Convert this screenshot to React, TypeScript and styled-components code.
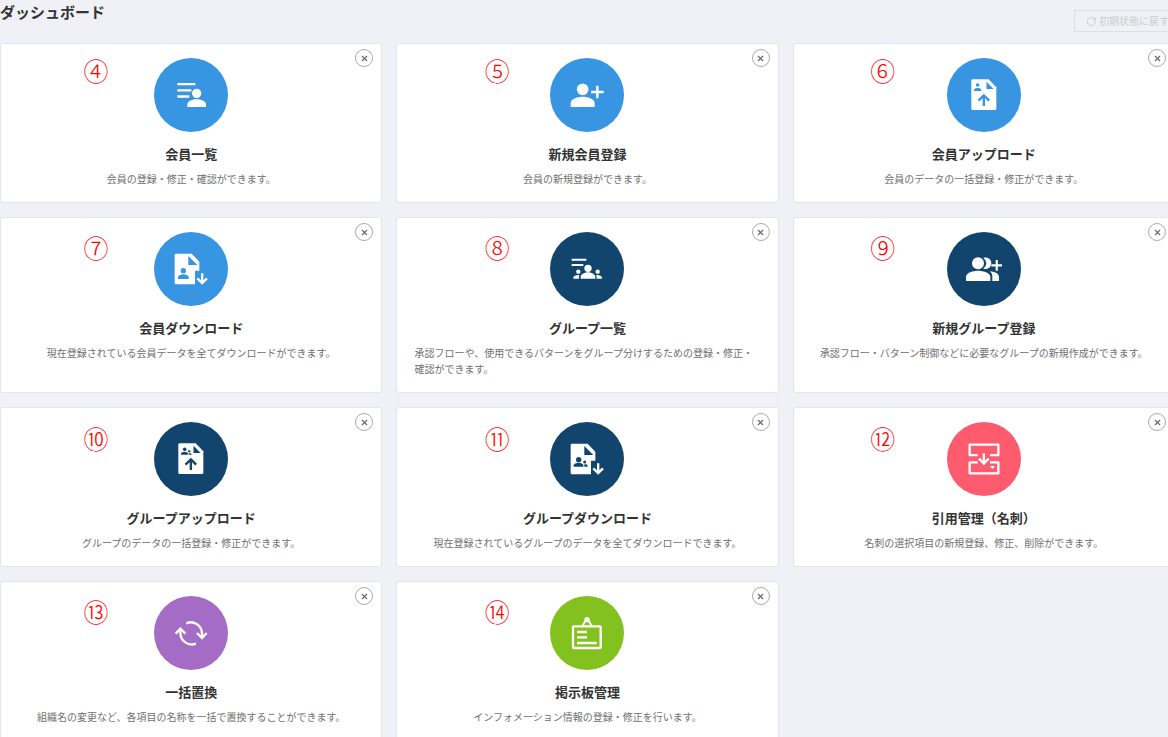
import React from "react";
import styled, { createGlobalStyle } from "styled-components";
import { RotateCw, X } from "lucide-react";

const GlobalStyle = createGlobalStyle`
  *, *::before, *::after { box-sizing: border-box; }
  html { background: #f0f1f6; }
  body {
    margin: 0;
    overflow-x: hidden;
    color: #333;
    font-family: "Noto Sans CJK JP", "Noto Sans", sans-serif;
  }
`;

const Page = styled.main`
  margin-right: -7px;
  padding-bottom: 15px;
`;

const Header = styled.header`
  display: flex;
  justify-content: space-between;
  align-items: flex-start;
  height: 43px;
`;

const PageTitle = styled.h1`
  margin: 0;
  font-size: 15px;
  line-height: 24px;
  font-weight: 700;
`;

const ResetButton = styled.button`
  display: flex;
  align-items: center;
  gap: 2px;
  height: 22px;
  margin-top: 10px;
  padding: 0 5px 0 11px;
  border: 1px solid #dedfe3;
  background: transparent;
  color: #cbccd0;
  font-family: inherit;
  font-size: 10px;
  line-height: 16px;
  white-space: nowrap;
`;

const CardGrid = styled.div`
  display: grid;
  grid-template-columns: repeat(3, minmax(0, 1fr));
  gap: 14px;
`;

const Card = styled.section`
  position: relative;
  display: flex;
  flex-direction: column;
  align-items: center;
  padding: 14px 14px 15px;
  border: 1px solid #e3e5e9;
  border-radius: 3px;
  background: #fff;
`;

const Badge = styled.div<{ $color: string }>`
  width: 74px;
  height: 74px;
  border-radius: 50%;
  background: ${(p) => p.$color};
  color: ${(p) => p.$color};

  svg {
    display: block;
    width: 100%;
    height: 100%;
  }
`;

const CardTitle = styled.h2`
  margin: 12px 0 0;
  font-size: 13px;
  line-height: 20px;
  font-weight: 700;
`;

const Description = styled.p`
  max-width: 346px;
  margin: 7px 0 0;
  color: #707070;
  font-size: 10px;
  line-height: 16px;
`;

const CloseButton = styled.button`
  position: absolute;
  top: 5px;
  right: 8px;
  display: flex;
  align-items: center;
  justify-content: center;
  width: 18px;
  height: 18px;
  padding: 0;
  border: 1px solid #aaa;
  border-radius: 50%;
  background: #fff;
  color: #666;
`;

const Marker = styled.span<{ $x: number; $y: number }>`
  position: absolute;
  left: ${(p) => p.$x}px;
  top: ${(p) => p.$y}px;
  width: 26px;
  color: #f00;
  font-size: 25px;
  line-height: 26px;
  font-weight: 300;
  text-align: center;
`;

const Icon = ({ children }: { children: React.ReactNode }) => (
  <svg viewBox="0 0 222 222" fill="#fff" aria-hidden="true">
    {children}
  </svg>
);

const stroke = (width: number, color = "#fff") => ({
  fill: "none",
  stroke: color,
  strokeWidth: width,
});

const MemberList = () => (
  <Icon>
    <path d="M70 75h54v7H70zM70 93.500h42v7H70zM70 112h36v7H70z" />
    <circle cx="128" cy="106" r="14" />
    <path d="M100 147v-8c0-10 17-15 28-15s28 5 28 15v8z" />
  </Icon>
);

const MemberAdd = () => (
  <Icon>
    <circle cx="98" cy="94" r="17.500" />
    <path d="M62 147v-12c0-13 22-19 36-19s36 6 36 19v12z" />
    <path d="M138.500 83h7v15.500H161v7h-15.500V121h-7v-15.500H123v-7h15.500z" />
  </Icon>
);

const UploadSheet = ({ children }: { children: React.ReactNode }) => (
  <Icon>
    <path d="M77 64h48l23 24v64q0 4-4 4H77q-4 0-4-4V68q0-4 4-4z" />
    <g fill="currentColor">
      <path d="M118.500 71v22H140z" />
      {children}
    </g>
    <path d="M110.500 144v-32M94.500 128l16-16 16 16" {...stroke(7, "currentColor")} />
  </Icon>
);

const MemberUpload = () => (
  <UploadSheet>
    <circle cx="92" cy="81" r="5.500" />
    <path d="M81 99v-3c0-4 7-6 11-6s11 2 11 6v3z" />
  </UploadSheet>
);

const GroupUpload = () => (
  <UploadSheet>
    <circle cx="92" cy="82" r="5.500" />
    <path d="M81 98v-3c0-4 7-5 10.500-5s10.500 1 10.500 5v3z" />
    <circle cx="105.500" cy="88" r="3.500" />
    <path d="M104 98v-4c4-1 9 0 9 4z" />
  </UploadSheet>
);

const DownloadSheet = ({ children }: { children: React.ReactNode }) => (
  <Icon>
    <path d="M66 65h47l23 24v27h-13v41H66q-4 0-4-4V69q0-4 4-4z" />
    <g fill="currentColor">
      <path d="M103 72v27h27z" />
      {children}
    </g>
    <path d="M144.500 124v29M130 139l14.500 14.500L159 139" {...stroke(7)} />
  </Icon>
);

const MemberDownload = () => (
  <DownloadSheet>
    <circle cx="88" cy="116" r="8" />
    <path d="M72 141v-5c0-6 10-9 16-9s16 3 16 9v5z" />
  </DownloadSheet>
);

const GroupDownload = () => (
  <DownloadSheet>
    <circle cx="86" cy="113" r="8" />
    <path d="M71 134v-4c0-5 9-8 15-8s14 3 14 8v4z" />
    <circle cx="104" cy="120" r="4.500" />
    <path d="M103 134v-7c5-1 10 1 10 4v3z" />
  </DownloadSheet>
);

const GroupList = () => (
  <Icon>
    <path d="M65 80h44v6H65zM65 96h35v6H65z" />
    <circle cx="114" cy="109" r="11" />
    <path d="M92 140v-5c0-9 14-14 22-14s22 5 22 14v5z" />
    <circle cx="85" cy="119" r="6.500" />
    <circle cx="143" cy="119" r="6.500" />
    <path d="M70 140v-3c0-6 10-9 18-8q-2 5-1 11zM156 140v-3c0-6-10-9-18-8q3 5 2 11z" />
  </Icon>
);

const GroupAdd = () => (
  <Icon>
    <circle cx="93" cy="94" r="18" />
    <path d="M57 147v-13c0-12 22-18 36-18s37 6 37 18v13z" />
    <path d="M109 78c5-3 24-1 24 16s-19 19-24 16q9-6 9-16t-9-16z" />
    <path d="M129 118c12 1 27 6 27 17v12h-20v-13q0-10-7-16z" />
    <path
      d="M146 84h6.500v13H165v6.500h-12.500V116H146v-12.500h-13V97h13z"
      stroke="currentColor"
      strokeWidth="3"
      paintOrder="stroke"
    />
  </Icon>
);

const Citation = () => (
  <Icon>
    <path
      d="M92 99.500H68V68h86v31.500h-25M92 121H68v33h86v-33h-25"
      strokeLinejoin="round"
      {...stroke(7)}
    />
    <path d="M110.500 94v30M96 110l14.500 14.500L125 110" {...stroke(7)} />
    <path d="M128 132h16l-8 9z" />
  </Icon>
);

const Replace = () => (
  <Icon>
    <path d="M97 82C119 72 144 88 144 113v12M126 143C103 152 79 135 79 110V99" {...stroke(7)} />
    <path d="M129 111l15 15 14-15M65 113l14-15 15 15" {...stroke(7)} />
  </Icon>
);

const Board = () => (
  <Icon>
    <rect x="69" y="91" width="83" height="65" rx="2" {...stroke(7)} />
    <circle cx="111" cy="71" r="8" />
    <path d="M107 73l-10 17M115 73l10 17" {...stroke(6)} />
    <path d="M81 108h30M81 124h30M81 141h59" {...stroke(7)} />
  </Icon>
);

const BLUE = "#3895e1";
const NAVY = "#12456e";

const markerColumns = [82, 87, 76];
const markerRows = [13, 16, 17, 16];

const cards = [
  { mark: "④", title: "会員一覧", text: "会員の登録・修正・確認ができます。", color: BLUE, Art: MemberList },
  { mark: "⑤", title: "新規会員登録", text: "会員の新規登録ができます。", color: BLUE, Art: MemberAdd },
  { mark: "⑥", title: "会員アップロード", text: "会員のデータの一括登録・修正ができます。", color: BLUE, Art: MemberUpload },
  { mark: "⑦", title: "会員ダウンロード", text: "現在登録されている会員データを全てダウンロードができます。", color: BLUE, Art: MemberDownload },
  { mark: "⑧", title: "グループ一覧", text: "承認フローや、使用できるパターンをグループ分けするための登録・修正・確認ができます。", color: NAVY, Art: GroupList },
  { mark: "⑨", title: "新規グループ登録", text: "承認フロー・パターン制御などに必要なグループの新規作成ができます。", color: NAVY, Art: GroupAdd },
  { mark: "⑩", title: "グループアップロード", text: "グループのデータの一括登録・修正ができます。", color: NAVY, Art: GroupUpload },
  { mark: "⑪", title: "グループダウンロード", text: "現在登録されているグループのデータを全てダウンロードできます。", color: NAVY, Art: GroupDownload },
  { mark: "⑫", title: "引用管理（名刺）", text: "名刺の選択項目の新規登録、修正、削除ができます。", color: "#ff5b6e", Art: Citation },
  { mark: "⑬", title: "一括置換", text: "組織名の変更など、各項目の名称を一括で置換することができます。", color: "#a56cc5", Art: Replace },
  { mark: "⑭", title: "掲示板管理", text: "インフォメーション情報の登録・修正を行います。", color: "#83c11f", Art: Board },
];

export default function App() {
  return (
    <>
      <GlobalStyle />
      <Page>
        <Header>
          <PageTitle>ダッシュボード</PageTitle>
          <ResetButton type="button">
            <RotateCw size={11} strokeWidth={2} aria-hidden="true" />
            初期状態に戻す
          </ResetButton>
        </Header>
        <CardGrid>
          {cards.map(({ mark, title, text, color, Art }, i) => (
            <Card key={title}>
              <Marker $x={markerColumns[i % 3]} $y={markerRows[Math.floor(i / 3)]}>
                {mark}
              </Marker>
              <CloseButton type="button" aria-label={`${title}を閉じる`}>
                <X size={9} strokeWidth={3} aria-hidden="true" />
              </CloseButton>
              <Badge $color={color}>
                <Art />
              </Badge>
              <CardTitle>{title}</CardTitle>
              <Description>{text}</Description>
            </Card>
          ))}
        </CardGrid>
      </Page>
    </>
  );
}
